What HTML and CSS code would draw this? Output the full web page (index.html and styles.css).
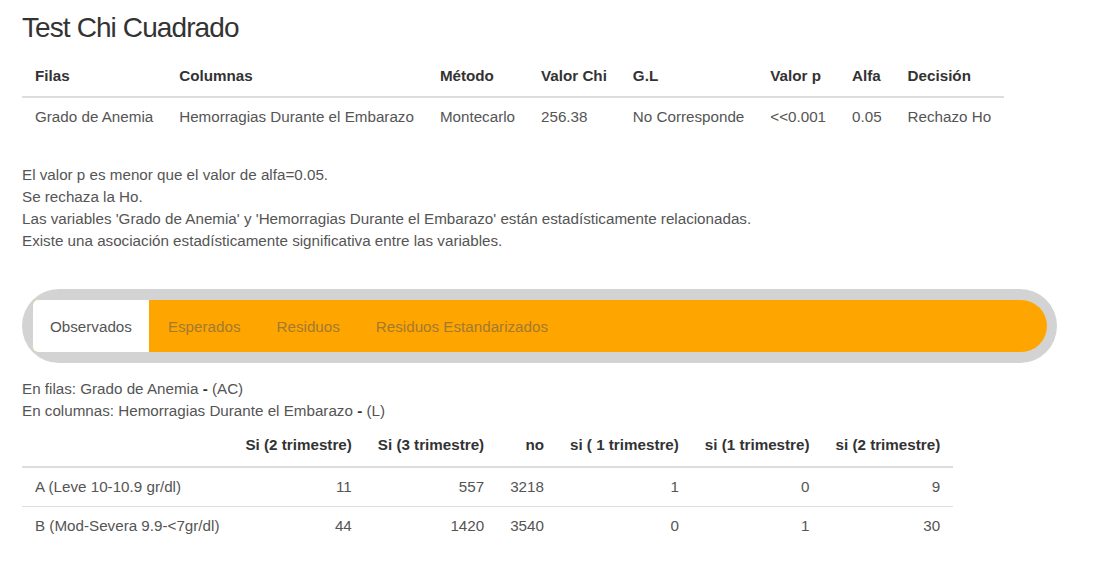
FILE: index.html
```html
<!DOCTYPE html>
<html lang="es">
<head>
<meta charset="utf-8">
<title>Test Chi Cuadrado</title>
<link rel="stylesheet" href="styles.css">
</head>
<body>
<h1 class="title">Test Chi Cuadrado</h1>
<table class="summary">
  <thead>
    <tr><th>Filas</th><th>Columnas</th><th>Método</th><th>Valor Chi</th><th>G.L</th><th>Valor p</th><th>Alfa</th><th>Decisión</th></tr>
  </thead>
  <tbody>
    <tr><td>Grado de Anemia</td><td>Hemorragias Durante el Embarazo</td><td>Montecarlo</td><td>256.38</td><td>No Corresponde</td><td>&lt;&lt;0.001</td><td>0.05</td><td>Rechazo Ho</td></tr>
  </tbody>
</table>
<div class="conclusion">
  <p>El valor p es menor que el valor de alfa=0.05.</p>
  <p>Se rechaza la Ho.</p>
  <p>Las variables 'Grado de Anemia' y 'Hemorragias Durante el Embarazo' están estadísticamente relacionadas.</p>
  <p>Existe una asociación estadísticamente significativa entre las variables.</p>
</div>
<div class="tabs-wrap">
  <ul class="tabs">
    <li class="tab active">Observados</li>
    <li class="tab">Esperados</li>
    <li class="tab">Residuos</li>
    <li class="tab">Residuos Estandarizados</li>
  </ul>
</div>
<div class="info">
  <p>En filas: Grado de Anemia <b>-</b> (AC)</p>
  <p>En columnas: Hemorragias Durante el Embarazo <b>-</b> (L)</p>
</div>
<table class="crosstab">
  <thead>
    <tr><th></th><th>Si (2 trimestre)</th><th>Si (3 trimestre)</th><th>no</th><th>si ( 1 trimestre)</th><th>si (1 trimestre)</th><th>si (2 trimestre)</th></tr>
  </thead>
  <tbody>
    <tr><td class="label">A (Leve 10-10.9 gr/dl)</td><td>11</td><td>557</td><td>3218</td><td>1</td><td>0</td><td>9</td></tr>
    <tr><td class="label">B (Mod-Severa 9.9-&lt;7gr/dl)</td><td>44</td><td>1420</td><td>3540</td><td>0</td><td>1</td><td>30</td></tr>
  </tbody>
</table>
</body>
</html>
```
FILE: styles.css
```css
* { box-sizing: border-box; }
body {
  margin: 0;
  padding: 0 22px;
  font-family: "Liberation Sans", Arial, sans-serif;
  font-size: 15.2px;
  color: #555;
  background: #fff;
}
.title {
  margin: 10px 0 0;
  font-size: 28px;
  line-height: 36px;
  letter-spacing: -0.9px;
  font-weight: normal;
  color: #333;
}
table { border-collapse: collapse; }
th {
  font-weight: bold;
  color: #333;
  line-height: 20px;
}
td { line-height: 20px; }
.summary { margin-top: 10px; }
.summary th, .summary td { text-align: left; padding: 10px 13px; }
.summary td { padding: 9px 13px; }
.summary thead th { border-bottom: 2px solid #ddd; }

.conclusion { margin-top: 28px; }
.conclusion p, .info p { margin: 0; line-height: 22px; }

.tabs-wrap {
  margin: 37px 33px 0 0;
  background: #d3d3d3;
  border-radius: 38px;
  padding: 11px 10px 11px 11px;
}
.tabs {
  list-style: none;
  margin: 0;
  padding: 0;
  display: flex;
  height: 52px;
  background: #ffa500;
  border-radius: 5px 26px 26px 5px;
}
.tab {
  display: flex;
  align-items: center;
  padding: 0 17px 0 17px;
  margin-right: 2px;
  color: #a27a32;
}
.tab.active {
  background: #fff;
  color: #555;
  border-radius: 5px 0 0 5px;
}

.info { margin-top: 15px; }
.info b { color: #333; }

.crosstab { margin-top: 2px; }
.crosstab th, .crosstab td { text-align: right; padding: 11px 13px; }
.crosstab td { padding: 9px 13px; }
.crosstab td.label { text-align: left; }
.crosstab thead th { border-bottom: 2px solid #ddd; }
.crosstab tbody tr + tr td { border-top: 1px solid #ddd; }
```
